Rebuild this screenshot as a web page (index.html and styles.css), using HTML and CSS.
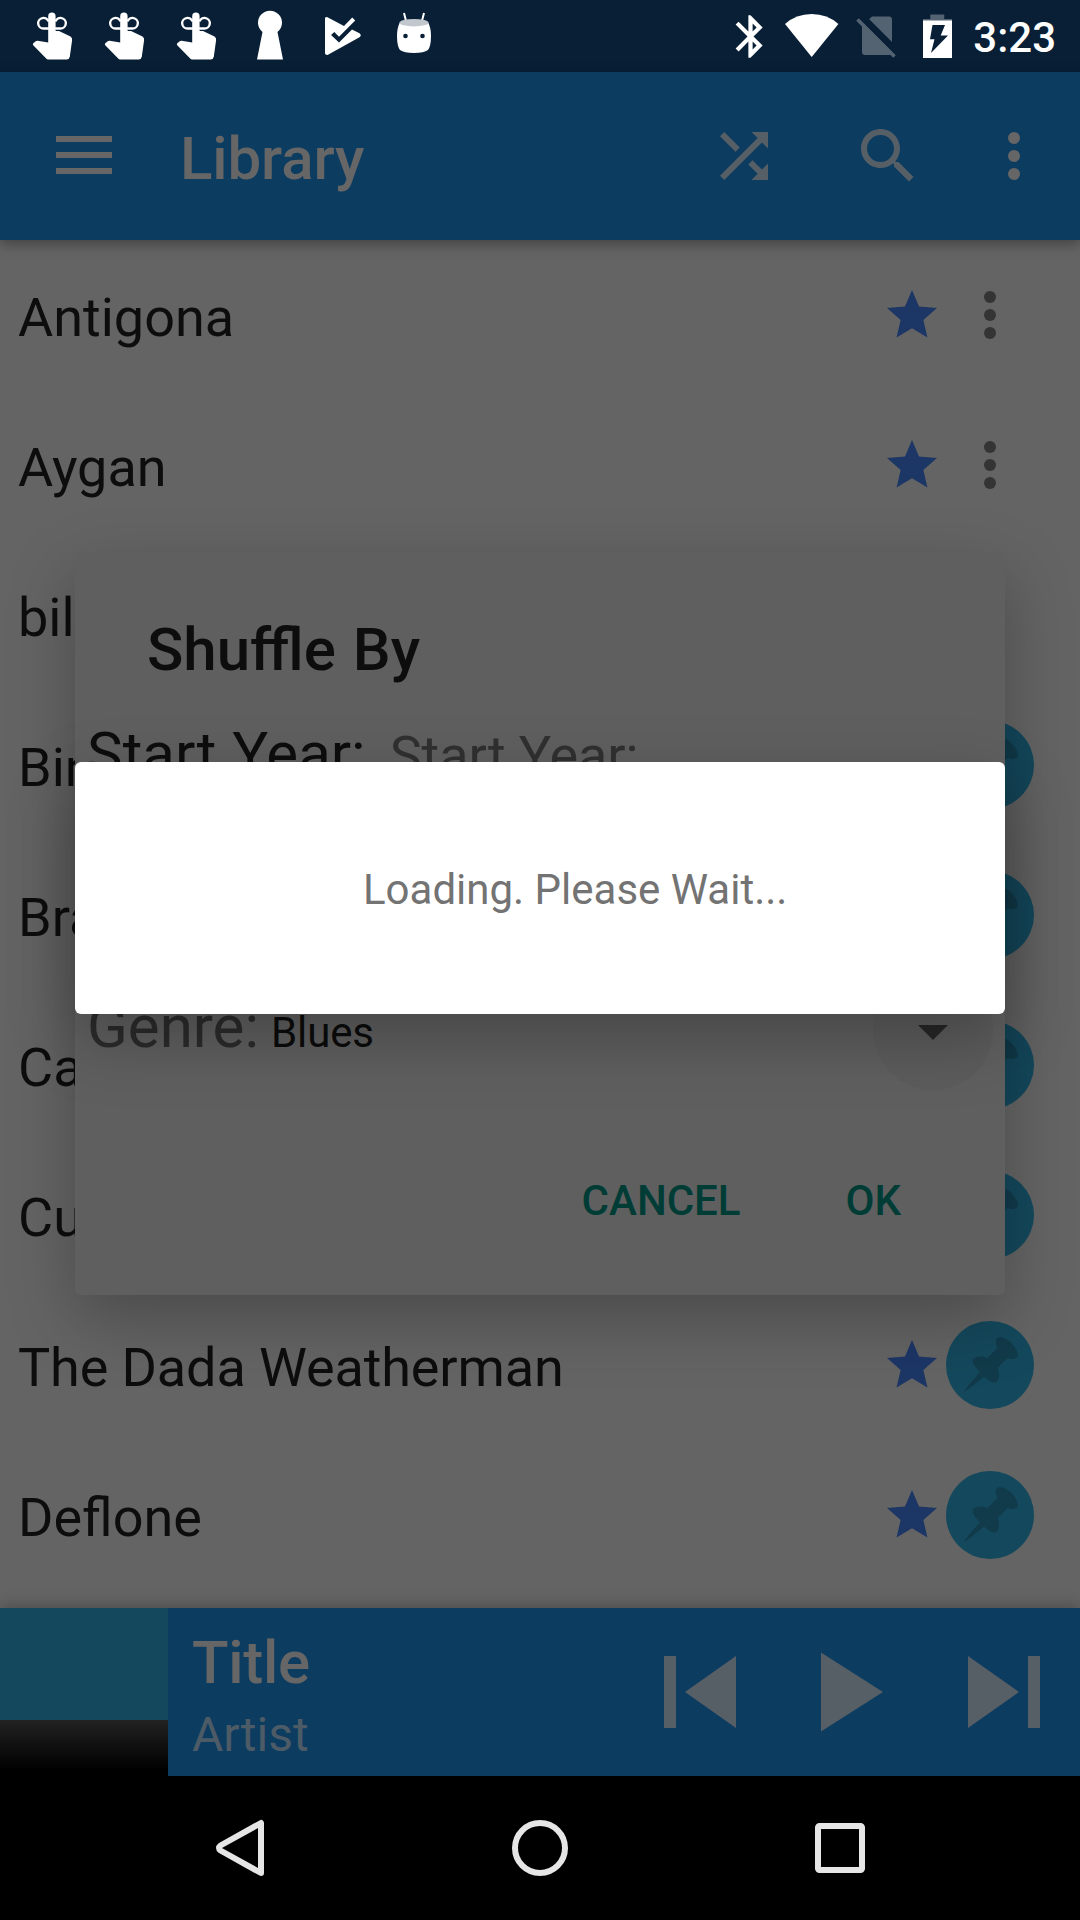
FILE: index.html
```html
<!DOCTYPE html>
<html lang="en">
<head>
<meta charset="utf-8">
<title>Library</title>
<link rel="stylesheet" href="styles.css">
</head>
<body>
<svg width="0" height="0" class="defs">
  <symbol id="tap" viewBox="0 0 72 72">
    <path d="M30.200 42.500V16.200a3.700 3.700 0 0 1 7.400 0V31H41l11.500 5.600q1.900 1.100 1.600 3.600l-2.300 16.600q-.5 2.700-3 2.700H30q-1 0-1.800-.9L15 45q-.4-.9.300-1.700l2.400-2.100q.9-.7 2-.5z" fill="#fff"/>
    <path d="M31 28.500h-5.500a5.300 5.300 0 1 1 5-7M37 28.500h5.500a5.300 5.300 0 1 0-5-7" fill="none" stroke="#fff" stroke-width="2.300"/>
  </symbol>
  <symbol id="star" viewBox="0 0 24 24"><path d="M12 17.270L18.180 21l-1.640-7.030L22 9.240l-7.190-.61L12 2 9.190 8.630 2 9.240l5.460 4.730L5.820 21z"/></symbol>
  <symbol id="more" viewBox="0 0 24 24"><circle cx="12" cy="6" r="2"/><circle cx="12" cy="12" r="2"/><circle cx="12" cy="18" r="2"/></symbol>
  <symbol id="pin" viewBox="0 0 88 88">
    <circle cx="44" cy="44" r="44" fill="#14485c"/>
    <path d="M50.500 17.500C55 14 64 19 69 26.500C73 33 73 37.500 67.500 38C65 38 63.500 37.500 61.500 37L51.500 47C54 52 53.500 58 50.500 61.200C46 62.500 41.500 58.500 38 55.500C31 61 24 67.500 17.500 71.500C21.500 65.500 28 57.500 34 51.500C31.500 48 25.500 42.500 27 38.200C31 34.500 37 35 41.500 37L51.500 27C50 24 49.300 20 50.500 17.500z" fill="#113a4a"/>
  </symbol>
</svg>

<div class="screen">
  <header class="status">
    <div class="notifications">
      <svg class="note"><use href="#tap"/></svg>
      <svg class="note"><use href="#tap"/></svg>
      <svg class="note"><use href="#tap"/></svg>
      <svg class="note" viewBox="0 0 72 72" fill="#fff"><path d="M28.500 32a12 12 0 1 1 15 0L49 59.500H23z"/></svg>
      <svg class="note" viewBox="0 0 72 72" fill="#fff"><path d="M19 18.500q.3-2 2.500-1.300L38 26l8.200-8.500 3 3L33 36.800 28.300 32l-3.200 3 7.900 7.500 13-13 7.500 3.700q2.500 1.800 0 4L22 54.800q-2.500.5-3-1.300z"/></svg>
      <svg class="note" viewBox="0 0 72 72">
        <path d="M26 13l2.300 9M46 13l-2.300 9" stroke="#fff" stroke-width="2" fill="none"/>
        <path d="M22 22h28q3 6 3 14 0 10-3 14-4 3-14 3t-14-3q-3-4-3-14 0-8 3-14z" fill="#fff"/>
        <ellipse cx="36" cy="22.700" rx="14.500" ry="3.700" fill="#c1c7cd"/>
        <circle cx="27.500" cy="36" r="2.300" fill="#081f36"/><circle cx="44.500" cy="36" r="2.300" fill="#081f36"/>
      </svg>
    </div>
    <div class="system">
      <svg class="bluetooth" viewBox="0 0 24 24" fill="#fff"><path d="M17.710 7.710L12 2h-1v7.590L6.410 5 5 6.410 10.590 12 5 17.590 6.410 19 11 14.410V22h1l5.710-5.710-4.300-4.290 4.300-4.290zM13 5.830l1.880 1.880L13 9.590V5.830zm1.880 10.460L13 18.170v-3.760l1.880 1.880z"/></svg>
      <svg class="wifi" viewBox="0 0 54 72" fill="#fff"><path d="M0 24Q11 14 26.700 14T53.400 24L26.700 57z"/></svg>
      <svg class="sim" viewBox="0 0 42 72"><path d="M16 16.500h17q3 0 3 3V52q0 3-3 3H9q-3 0-3-3V26z" fill="#546372"/><path d="M2.500 17.500l38 38" stroke="#081f36" stroke-width="7" transform="translate(2,-2)"/><path d="M1.500 19.500l37 37" stroke="#546372" stroke-width="3.600"/></svg>
      <svg class="battery" viewBox="0 0 30 72"><path d="M7.300 14.500h14V19h7.700v2H0v-2h7.300z" fill="#546372"/><path d="M0 20.500h29V58H0z" fill="#fff"/><path d="M9.500 25H22l-4.300 10.500H25L8 53l3.500-13.800H7z" fill="#081f36"/></svg>
      <span class="clock">3:23</span>
    </div>
  </header>

  <nav class="appbar">
    <div class="burger"><i></i><i></i><i></i></div>
    <h1 class="apptitle">Library</h1>
    <svg class="icon shuffle" viewBox="0 0 24 24"><path d="M10.590 9.170L5.410 4 4 5.410l5.170 5.170 1.420-1.410zM14.500 4l2.040 2.040L4 18.590 5.410 20 17.960 7.460 20 9.500V4h-5.500zm.330 9.410l-1.410 1.410 3.130 3.130L14.500 20H20v-5.500l-2.040 2.040-3.130-3.130z"/></svg>
    <svg class="icon search" viewBox="0 0 24 24"><path d="M15.500 14h-.79l-.28-.27C15.410 12.590 16 11.110 16 9.500 16 5.910 13.090 3 9.500 3S3 5.910 3 9.500 5.910 16 9.500 16c1.610 0 3.090-.59 4.230-1.570l.27.28v.79l5 4.990L20.490 19l-4.990-5zm-6 0C7.010 14 5 11.990 5 9.500S7.010 5 9.500 5 14 7.010 14 9.500 11.990 14 9.500 14z"/></svg>
    <svg class="icon overflow"><use href="#more"/></svg>
  </nav>

  <main class="list">
    <div class="row"><span class="name">Antigona</span><svg class="star"><use href="#star"/></svg><svg class="more"><use href="#more"/></svg></div>
    <div class="row"><span class="name">Aygan</span><svg class="star"><use href="#star"/></svg><svg class="more"><use href="#more"/></svg></div>
    <div class="row"><span class="name">bil</span></div>
    <div class="row"><span class="name">Bin</span><svg class="pin"><use href="#pin"/></svg></div>
    <div class="row"><span class="name">Bra</span><svg class="pin"><use href="#pin"/></svg></div>
    <div class="row"><span class="name">Ca</span><svg class="pin"><use href="#pin"/></svg></div>
    <div class="row"><span class="name">Cu</span><svg class="pin"><use href="#pin"/></svg></div>
    <div class="row"><span class="name long">The Dada Weatherman</span><svg class="star"><use href="#star"/></svg><svg class="pin"><use href="#pin"/></svg></div>
    <div class="row"><span class="name">Deflone</span><svg class="star"><use href="#star"/></svg><svg class="pin"><use href="#pin"/></svg></div>
  </main>

  <section class="player">
    <div class="cover"><div class="art"></div></div>
    <div class="track"><div class="title">Title</div><div class="artist">Artist</div></div>
    <svg class="controls" viewBox="0 0 400 168"><path d="M4 48h12v72H4zM76 48v72L25 84zM161 44.500v79L223 84zM308 48v72l51-36zM368 48h12v72h-12z"/></svg>
  </section>

  <footer class="navbar">
    <svg viewBox="0 0 72 72"><path d="M57 11v50L16.500 38.500q-3-2.500 0-5z"/></svg>
    <svg viewBox="0 0 72 72"><circle cx="36" cy="36" r="25"/></svg>
    <svg viewBox="0 0 72 72"><rect x="14" y="14" width="44" height="44" rx="1.500"/></svg>
  </footer>

  <section class="dialog shuffle-dialog">
    <h2 class="dialog-title">Shuffle By</h2>
    <div class="field year"><span class="label">Start Year:</span><span class="hint">Start Year:</span></div>
    <div class="field genre"><span class="label">Genre:</span><span class="value">Blues</span><span class="ripple"><svg class="caret" viewBox="0 0 30 15"><path d="M0 0h30L15 15z"/></svg></span></div>
    <div class="actions"><span>CANCEL</span><span>OK</span></div>
  </section>

  <section class="dialog loading">Loading. Please Wait...</section>
</div>
</body>
</html>
```
FILE: styles.css
```css
* { box-sizing: border-box; }
body { margin: 0; font-family: Roboto, sans-serif; }
h1, h2 { margin: 0; font-weight: 500; }
svg { display: block; flex: none; }
.defs { position: absolute; }

.screen {
  position: relative;
  width: 1080px;
  height: 1920px;
  overflow: hidden;
  display: flex;
  flex-direction: column;
  background: #646464;
}

/* status bar */
.status {
  height: 72px;
  display: flex;
  justify-content: space-between;
  padding: 0 24px 0 18px;
  background: #081f36;
}
.notifications, .system { display: flex; }
.note { width: 72px; height: 72px; }
.bluetooth { width: 51px; height: 51px; margin-top: 11px; }
.wifi { width: 54px; height: 72px; margin-left: 9px; }
.sim { width: 42px; height: 72px; margin-left: 17px; }
.battery { width: 30px; height: 72px; margin-left: 25px; }
.clock {
  margin-left: 20px;
  color: #fff;
  font-size: 42px;
  font-weight: 500;
  line-height: 75px;
}

/* app bar */
.appbar {
  position: relative;
  z-index: 1;
  height: 168px;
  flex: none;
  display: flex;
  align-items: center;
  padding: 0 30px 0 56px;
  background: #0d3c61;
  box-shadow: 0 4px 12px rgba(0, 0, 0, .35);
}
.burger { width: 56px; display: flex; flex-direction: column; gap: 10px; margin-top: -2px; }
.burger i { height: 6px; background: #666; }
.apptitle { flex: 1; padding: 5px 0 0 68px; font-size: 60px; line-height: 70px; letter-spacing: -.1px; color: #666; }
.icon { width: 72px; height: 72px; fill: #565f66; }
.search { margin-left: 72px; }
.overflow { margin-left: 54px; fill: #666; }

/* artist list */
.list { flex: 1; min-height: 0; }
.row { height: 150px; display: flex; align-items: center; padding: 0 46px 0 18px; }
.name { flex: 1; padding-top: 5px; font-size: 54px; line-height: 64px; color: #0d0d0d; }
.name.long { letter-spacing: -.12px; }
.star { width: 60px; height: 60px; margin-right: 4px; fill: #1c3666; }
.pin { width: 88px; height: 88px; }
.more { width: 72px; height: 72px; margin: 0 8px; fill: #343434; }

/* player */
.player {
  position: relative;
  height: 168px;
  flex: none;
  display: flex;
  background: #0d3c61;
  box-shadow: 0 -2px 14px rgba(0, 0, 0, .25);
}
.cover { width: 168px; background: linear-gradient(#222 112px, #000 162px); }
.art { height: 112px; background: #14485c; }
.track { flex: 1; padding: 20px 0 0 24px; }
.title { font-size: 60px; font-weight: 500; line-height: 70px; letter-spacing: -.3px; color: #666; }
.artist { padding-top: 9px; font-size: 48px; line-height: 56px; color: #4c5b66; }
.controls { width: 400px; height: 168px; margin-right: 20px; fill: #565f66; }

/* system navigation */
.navbar {
  position: relative;
  height: 144px;
  flex: none;
  display: flex;
  justify-content: center;
  align-items: center;
  gap: 228px;
  background: #000;
}
.navbar svg { width: 72px; height: 72px; fill: none; stroke: #e6e6e6; stroke-width: 6; stroke-linejoin: round; }

/* dialogs */
.dialog {
  position: absolute;
  z-index: 2;
  left: 75px;
  width: 930px;
  border-radius: 6px;
  box-shadow: 0 24px 66px rgba(0, 0, 0, .26);
}
.shuffle-dialog { top: 552px; height: 743px; padding: 63px 12px 0; background: #5f5f5f; }
.dialog-title { padding-left: 60px; font-size: 60px; line-height: 70px; word-spacing: 2px; color: #0d0d0d; }
.field { display: flex; align-items: baseline; height: 70px; font-size: 60px; line-height: 70px; }
.year { margin-top: 34px; color: #0d0d0d; }
.year .label { word-spacing: 1px; }
.hint { margin-left: 24px; font-size: 54px; letter-spacing: -.1px; color: #303030; }
.genre { margin-top: 203px; color: #2b2b2b; }
.value { flex: 1; margin-left: 12px; font-size: 42px; letter-spacing: -.1px; color: #0b0b0b; }
.ripple {
  width: 120px;
  height: 120px;
  align-self: center;
  display: grid;
  place-items: center;
  margin-top: 5px;
  border-radius: 50%;
  background: rgba(0, 0, 0, .03);
}
.caret { width: 30px; height: 15px; margin-top: 6px; fill: #272727; }
.actions {
  display: flex;
  justify-content: flex-end;
  gap: 105px;
  margin-top: 104px;
  padding-right: 92px;
  font-size: 42px;
  font-weight: 500;
  line-height: 70px;
  color: #003c36;
}
.loading {
  top: 762px;
  height: 252px;
  z-index: 3;
  padding-left: 288px;
  background: #fff;
  color: #737373;
  font-size: 42px;
  line-height: 255px;
}
```
